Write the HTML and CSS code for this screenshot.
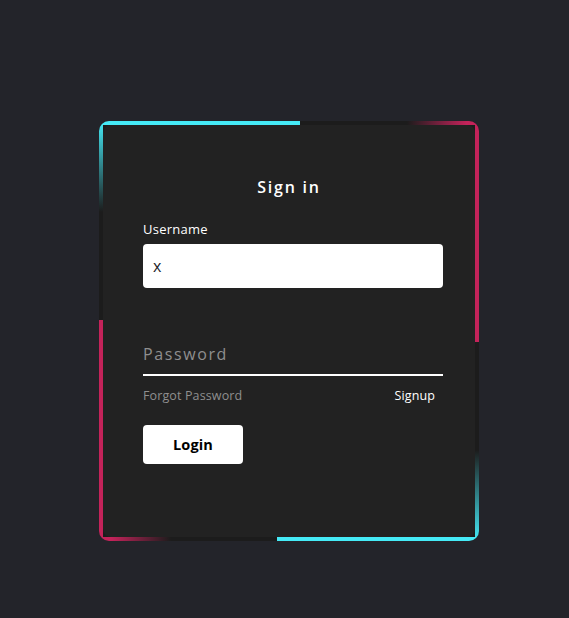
FILE: index.html
```html
<!DOCTYPE html>
<html lang="en">
<head>
<meta charset="utf-8">
<title>Sign in</title>
<link rel="stylesheet" href="styles.css">
</head>
<body>
<div class="page">
  <div class="box">
    <form class="form">
      <h2 class="title">Sign in</h2>
      <label class="label" for="user">Username</label>
      <input class="text-input" id="user" type="text" value="x">
      <input class="line-input" type="password" placeholder="Password">
      <div class="links">
        <a class="link muted" href="#">Forgot Password</a>
        <a class="link" href="#">Signup</a>
      </div>
      <button class="btn" type="button">Login</button>
    </form>
  </div>
</div>
</body>
</html>
```

FILE: styles.css
```css
html, body {
  margin: 0;
  padding: 0;
  background: #23242a;
  height: 100%;
}
.page {
  padding: 121px 0 0 99px;
  font-family: "Open Sans", "Noto Sans", sans-serif;
}
.box {
  --c: #45eaf6;
  --p: #c4235a;
  width: 380px;
  height: 420px;
  box-sizing: border-box;
  padding: 4px;
  border-radius: 10px;
  background-color: #1c1c1c;
  background-repeat: no-repeat;
  background-image:
    linear-gradient(var(--c), var(--c)),
    linear-gradient(to right, rgba(196,35,90,0), var(--p) 83%, var(--p)),
    linear-gradient(var(--p), var(--p)),
    linear-gradient(to bottom, rgba(69,234,246,0), var(--c)),
    linear-gradient(var(--c), var(--c)),
    linear-gradient(to left, rgba(196,35,90,0), var(--p) 83%, var(--p)),
    linear-gradient(var(--p), var(--p)),
    linear-gradient(to top, rgba(69,234,246,0), var(--c));
  background-size:
    201px 4px,
    72px 4px,
    4px 221px,
    4px 91px,
    202px 4px,
    72px 4px,
    4px 221px,
    4px 91px;
  background-position:
    0 0,
    308px 0,
    376px 0,
    376px 329px,
    178px 416px,
    0 416px,
    0 199px,
    0 0;
}
.form {
  box-sizing: border-box;
  height: 100%;
  margin: 0;
  border-radius: 8px;
  background: #222222;
  padding: 50px 40px 0 40px;
  display: flex;
  flex-direction: column;
  align-items: flex-start;
}
.title {
  align-self: stretch;
  margin: 0;
  text-align: center;
  color: #ffffff;
  font-size: 16px;
  font-weight: 600;
  letter-spacing: 0.11em;
  line-height: 24px;
}
.label {
  margin-top: 20px;
  color: #ffffff;
  font-size: 13px;
  line-height: 20px;
  font-weight: 500;
  letter-spacing: 0.02em;
}
.text-input {
  margin-top: 5px;
  width: 300px;
  height: 44px;
  box-sizing: border-box;
  border: none;
  border-radius: 4px;
  background: #ffffff;
  padding: 0 10px;
  font-family: inherit;
  font-size: 16px;
  color: #23242a;
  outline: none;
}
.line-input {
  margin-top: 46px;
  width: 300px;
  height: 42px;
  box-sizing: border-box;
  border: none;
  border-bottom: 2px solid #ffffff;
  background: transparent;
  padding: 0;
  font-family: inherit;
  font-size: 16px;
  letter-spacing: 0.1em;
  color: #ffffff;
  outline: none;
}
.line-input::placeholder {
  color: #8f8f8f;
}
.links {
  align-self: stretch;
  margin-top: 12px;
  display: flex;
  justify-content: space-between;
  line-height: 16px;
}
.link {
  color: #ffffff;
  font-size: 12.5px;
  letter-spacing: 0.01em;
  text-decoration: none;
}
.link.muted {
  color: #8f8f8f;
}
.btn {
  margin-top: 21px;
  width: 100px;
  height: 39px;
  border: none;
  border-radius: 4px;
  background: #ffffff;
  color: #000000;
  font-family: inherit;
  font-size: 14.5px;
  font-weight: 700;
  letter-spacing: 0.01em;
  padding: 0;
  cursor: pointer;
}
```
